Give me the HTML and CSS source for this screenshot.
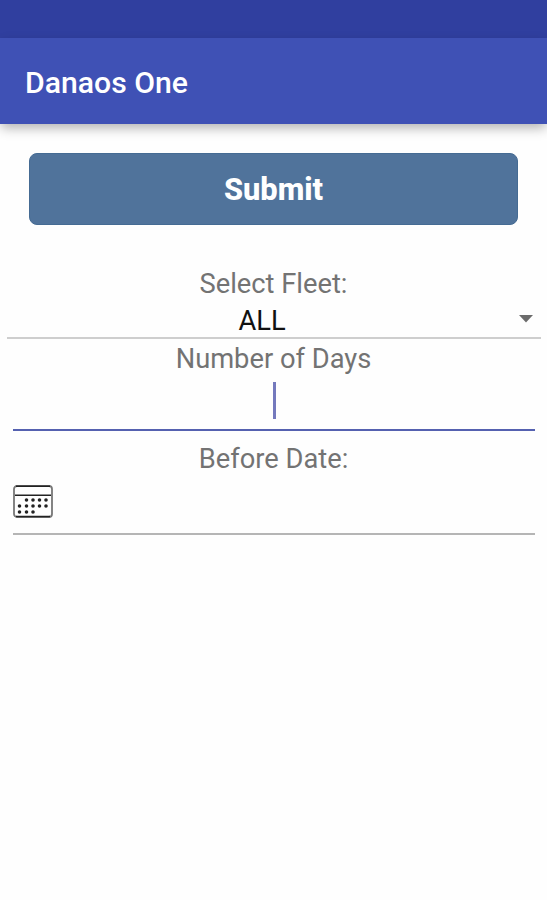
FILE: index.html
```
<!DOCTYPE html>
<html lang="en">
<head>
  <meta charset="UTF-8">
  <title>Danaos One</title>
  <link rel="stylesheet" href="styles.css">
</head>
<body>

<div class="status-bar"></div>
<header class="app-bar">
  <h1>Danaos One</h1>
</header>

<main class="form">
  <button class="submit">Submit</button>

  <div class="label">Select Fleet:</div>
  <div class="spinner">
    <span class="value">ALL</span>
    <svg class="arrow" width="14" height="8" viewBox="0 0 14 8"><path d="M0 0h14L7 7.600z" fill="#6b6b6b"/></svg>
  </div>

  <div class="label">Number of Days</div>
  <div class="field focused"><span class="cursor"></span></div>

  <div class="label">Before Date:</div>
  <div class="field date">
    <svg width="40" height="33" viewBox="0 0 40 33">
      <rect x="1" y="1" width="38" height="31" rx="3" fill="none" stroke="#777" stroke-width="1.8"/>
      <path d="M3 1.2h34M2 10.2h36M3 31.5h34" stroke="#222" stroke-width="1.6"/>
      <path d="M13.500 15h.01M20 15h.01M26.500 15h.01M33 15h.01M6.500 21h.01M13.500 21h.01M20 21h.01M26.500 21h.01M33 21h.01M6.500 27h.01M13.500 27h.01M20 27h.01" stroke="#222" stroke-width="3.600" stroke-linecap="round"/>
    </svg>
  </div>
</main>

</body>
</html>
```

FILE: styles.css
```
body {
  margin: 0;
  background: #fefefe;
  font-family: Roboto, sans-serif;
}
.status-bar {
  height: 38px;
  background: #303f9f;
}
.app-bar {
  height: 86px;
  display: flex;
  align-items: center;
  padding: 0 25px;
  box-sizing: border-box;
  background: #3f51b5;
  box-shadow: 0 5px 11px -1px rgba(0, 0, 0, 0.3);
}
h1 {
  margin: 0;
  padding-top: 3px;
  color: #fff;
  font-size: 30.2px;
  font-weight: 500;
}
.form {
  display: flex;
  flex-direction: column;
  padding-top: 29px;
}
.submit {
  height: 72px;
  margin: 0 29px 43px;
  padding: 1px 0 0;
  border: 1px solid #456b93;
  border-radius: 8px;
  background: #50739b;
  color: #fff;
  font-family: inherit;
  font-size: 30.8px;
  font-weight: 800;
}
.label {
  height: 32px;
  line-height: 32px;
  text-align: center;
  font-size: 27.3px;
  color: #737373;
}
.spinner {
  display: grid;
  grid-template-columns: 1fr auto 1fr;
  height: 32px;
  margin: 5px 6px 4px 7px;
  padding: 0 8px;
  border-bottom: 2px solid #cecece;
}
.value {
  grid-column: 2;
  padding-right: 24px;
  line-height: 32px;
  font-size: 27.3px;
  color: #111;
}
.arrow {
  justify-self: end;
  margin-top: 10px;
}
.field {
  height: 54px;
  margin: 0 12px 0 13px;
  border-bottom: 2px solid #b5b5b5;
}
.focused {
  display: flex;
  justify-content: center;
  border-color: #5561b0;
  margin-bottom: 12px;
}
.cursor {
  width: 3px;
  height: 37px;
  margin-top: 7px;
  background: #7479bd;
}
.date {
  height: 48px;
  padding-top: 10px;
}
```
